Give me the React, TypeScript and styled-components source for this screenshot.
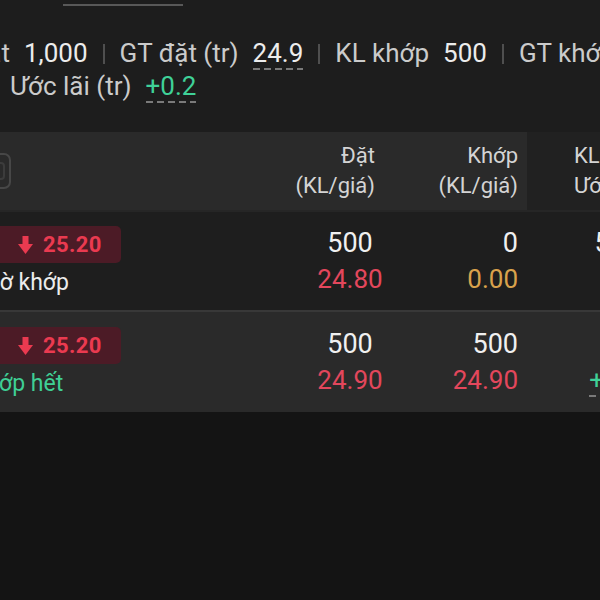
import styled, { createGlobalStyle } from "styled-components";

const GlobalStyle = createGlobalStyle`
  html, body {
    margin: 0;
    padding: 0;
    background: #1d1d1d;
  }
  body {
    font-family: Roboto, "Noto Sans", sans-serif;
  }
`;

const Screen = styled.div`
  width: 600px;
  height: 600px;
  overflow: hidden;
  background: #1d1d1d;
  display: flex;
  flex-direction: column;
`;

const TabLine = styled.div`
  width: 120px;
  margin: 4px 0 0 63px;
  border-bottom: 2px solid #585858;
`;

const Summary = styled.div`
  display: flex;
  flex-direction: column;
  gap: 2px;
  padding-top: 33px;
`;

const SummaryRow = styled.div<{ $indent: number }>`
  display: flex;
  align-items: flex-start;
  white-space: nowrap;
  font-size: 26px;
  line-height: 28px;
  padding-left: ${(p) => p.$indent}px;
`;

const Label = styled.span<{ $cut?: number }>`
  color: #cbcbcb;
  margin-left: ${(p) => (p.$cut ? -p.$cut : 0)}px;
`;

const Value = styled.span<{ $dashed?: boolean; $color?: string }>`
  display: inline-block;
  margin-left: 14px;
  padding-bottom: 3px;
  color: ${(p) => p.$color || "#ececec"};
  ${(p) =>
    p.$dashed &&
    `
    background-image: repeating-linear-gradient(to right, #7a7a7a 0 7px, transparent 7px 11px);
    background-size: 100% 2px;
    background-repeat: no-repeat;
    background-position: left bottom;
  `}
`;

const Sep = styled.span`
  flex: none;
  display: block;
  width: 2px;
  height: 20px;
  margin: 5px 15px 0 15px;
  background: #4f4f4f;
`;

const Table = styled.div`
  margin-top: 29px;
  display: flex;
  flex-direction: column;
`;

const Row = styled.div<{ $bg?: string; $line?: string; $height: number }>`
  display: grid;
  grid-template-columns: 300px 100px 127px 140px;
  width: 667px;
  height: ${(p) => p.$height}px;
  box-sizing: border-box;
  background: ${(p) => p.$bg || "transparent"};
  border-top: ${(p) => (p.$line ? `2px solid ${p.$line}` : "none")};
`;

const HeadCell = styled.div<{ $bg?: string; $align?: string; $pr?: number; $pl?: number }>`
  display: flex;
  flex-direction: column;
  justify-content: center;
  align-items: ${(p) => (p.$align === "left" ? "flex-start" : "flex-end")};
  background: ${(p) => p.$bg || "#2a2a2a"};
  padding: 0 ${(p) => p.$pr || 0}px 0 ${(p) => p.$pl || 0}px;
  font-size: 22px;
  line-height: 30px;
  color: #d4d4d4;
  white-space: nowrap;
`;

const IconWrap = styled.div`
  margin-left: -15px;
  display: flex;
`;

const StatusCell = styled.div`
  display: flex;
  flex-direction: column;
  justify-content: center;
  align-items: flex-start;
`;

const Badge = styled.div`
  display: inline-flex;
  align-items: center;
  gap: 10px;
  height: 37px;
  margin-left: -4px;
  padding: 0 19px 0 22px;
  border-radius: 5px;
  background: #4c1b26;
  color: #ea3a50;
  font-weight: 700;
  font-size: 22px;
  letter-spacing: 0.4px;
`;

const Status = styled.div<{ $color: string }>`
  margin: 7px 0 0 -28px;
  font-size: 23px;
  line-height: 26px;
  color: ${(p) => p.$color};
  white-space: nowrap;
`;

const ValueCell = styled.div<{ $align: "center" | "right"; $pr?: number }>`
  display: flex;
  flex-direction: column;
  justify-content: center;
  text-align: ${(p) => p.$align};
  padding-right: ${(p) => p.$pr || 0}px;
  white-space: nowrap;
`;

const Qty = styled.div`
  font-size: 27px;
  line-height: 36px;
  height: 36px;
  color: #f0f0f0;
`;

const Price = styled.div<{ $color: string }>`
  font-size: 26px;
  line-height: 36px;
  height: 36px;
  color: ${(p) => p.$color};
`;

const Profit = styled.span`
  display: inline-block;
  line-height: 30px;
  padding-bottom: 2px;
  color: #3fd198;
  background-image: repeating-linear-gradient(to right, #7a7a7a 0 7px, transparent 7px 11px);
  background-size: 100% 2px;
  background-repeat: no-repeat;
  background-position: left bottom;
`;

const Rest = styled.div`
  flex: 1;
  background: #141414;
`;

const RED = "#e3475c";
const AMBER = "#d9a24c";
const GREEN = "#3fcf95";

const DownArrow = () => (
  <svg width="15" height="18" viewBox="0 0 15 18">
    <rect x="4.5" y="0" width="6" height="9" fill="#ea3a50" />
    <polygon points="0,8 15,8 7.5,18" fill="#ea3a50" />
  </svg>
);

const FilterIcon = () => (
  <svg width="26" height="36" viewBox="0 0 26 36">
    <rect x="1" y="1" width="24" height="34" rx="6" fill="none" stroke="#474747" strokeWidth="2" />
    <rect x="7" y="10" width="12" height="16" rx="3" fill="none" stroke="#3c3c3c" strokeWidth="2" />
  </svg>
);

type Order = {
  price: string;
  status: string;
  statusColor: string;
  bg: string;
  line: string;
  height: number;
  placedQty: string;
  placedPrice: string;
  matchedQty: string;
  matchedPrice: string;
  matchedColor: string;
  remain: string;
  profit?: string;
};

const orders: Order[] = [
  {
    price: "25.20",
    status: "Chờ khớp",
    statusColor: "#ececec",
    bg: "#1e1e1e",
    line: "#262626",
    height: 100,
    placedQty: "500",
    placedPrice: "24.80",
    matchedQty: "0",
    matchedPrice: "0.00",
    matchedColor: AMBER,
    remain: "500",
  },
  {
    price: "25.20",
    status: "Khớp hết",
    statusColor: GREEN,
    bg: "#2a2a2a",
    line: "#383838",
    height: 102,
    placedQty: "500",
    placedPrice: "24.90",
    matchedQty: "500",
    matchedPrice: "24.90",
    matchedColor: RED,
    remain: "0",
    profit: "+0.2",
  },
];

const App = () => (
  <>
    <GlobalStyle />
    <Screen>
      <TabLine />
      <Summary>
        <SummaryRow $indent={0}>
          <Label $cut={65}>KL đặt</Label>
          <Value>1,000</Value>
          <Sep />
          <Label>GT đặt (tr)</Label>
          <Value $dashed>24.9</Value>
          <Sep />
          <Label>KL khớp</Label>
          <Value>500</Value>
          <Sep />
          <Label>GT khớp (tr)</Label>
        </SummaryRow>
        <SummaryRow $indent={10}>
          <Label>Ước lãi (tr)</Label>
          <Value $dashed $color="#3fd198">+0.2</Value>
        </SummaryRow>
      </Summary>
      <Table>
        <Row $height={78}>
          <HeadCell $align="left">
            <IconWrap>
              <FilterIcon />
            </IconWrap>
          </HeadCell>
          <HeadCell $pr={25}>
            <span>Đặt</span>
            <span>(KL/giá)</span>
          </HeadCell>
          <HeadCell $pr={9}>
            <span>Khớp</span>
            <span>(KL/giá)</span>
          </HeadCell>
          <HeadCell $bg="#212121" $align="left" $pl={47}>
            <span>KL còn</span>
            <span>Ước lãi</span>
          </HeadCell>
        </Row>
        {orders.map((o, i) => (
          <Row key={i} $height={o.height} $bg={o.bg} $line={o.line}>
            <StatusCell>
              <Badge>
                <DownArrow />
                {o.price}
              </Badge>
              <Status $color={o.statusColor}>{o.status}</Status>
            </StatusCell>
            <ValueCell $align="center">
              <Qty>{o.placedQty}</Qty>
              <Price $color={RED}>{o.placedPrice}</Price>
            </ValueCell>
            <ValueCell $align="right" $pr={9}>
              <Qty>{o.matchedQty}</Qty>
              <Price $color={o.matchedColor}>{o.matchedPrice}</Price>
            </ValueCell>
            <ValueCell $align="right" $pr={27}>
              <Qty>{o.remain}</Qty>
              <Price $color={GREEN}>{o.profit && <Profit>{o.profit}</Profit>}</Price>
            </ValueCell>
          </Row>
        ))}
      </Table>
      <Rest />
    </Screen>
  </>
);

export default App;
